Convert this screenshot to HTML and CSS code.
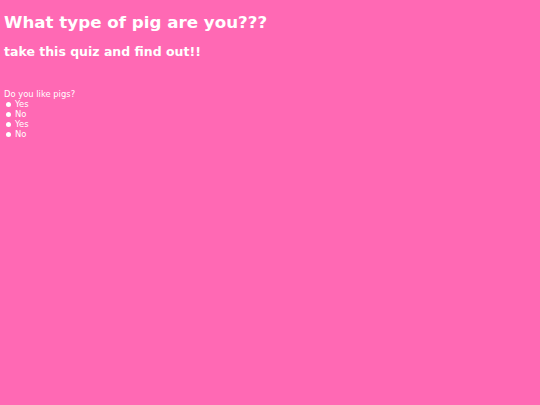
FILE: index.html
```html
<!DOCTYPE html>
<html>
<head>
<meta charset="utf-8">
<link rel="stylesheet" href="styles.css">
</head>
<body class="page">
<h1 class="title">What type of pig are you???</h1>
<h2 class="subtitle">take this quiz and find out!!</h2>
<div class="quiz">
<p class="question">Do you like pigs?</p>
<ul class="answers">
<li class="answer"><span class="dot"></span>Yes</li>
<li class="answer"><span class="dot"></span>No</li>
<li class="answer"><span class="dot"></span>Yes</li>
<li class="answer"><span class="dot"></span>No</li>
</ul>
</div>
</body>
</html>
```
FILE: styles.css
```css
html, body {
  background: #ff69b4;
}
.page {
  margin: 0;
  padding: 0 4px;
  color: #ffffff;
  font-family: "DejaVu Sans", Verdana, sans-serif;
}
.title {
  font-size: 16.7px;
  font-weight: bold;
  line-height: 19px;
  margin: 13px 0 0 0;
}
.subtitle {
  font-size: 12.5px;
  font-weight: bold;
  line-height: 15px;
  margin: 12px 0 0 0;
}
.quiz {
  margin-top: 31px;
  font-size: 8.4px;
}
.question {
  margin: 0;
  line-height: 9px;
}
.answers {
  margin: 0;
  padding: 0;
  list-style: none;
}
.answer {
  display: flex;
  align-items: center;
  height: 10px;
  line-height: 10px;
}
.dot {
  width: 5px;
  height: 5px;
  border-radius: 50%;
  background: #ffffff;
  margin: 0 4px 0 2px;
  flex: none;
}
```
